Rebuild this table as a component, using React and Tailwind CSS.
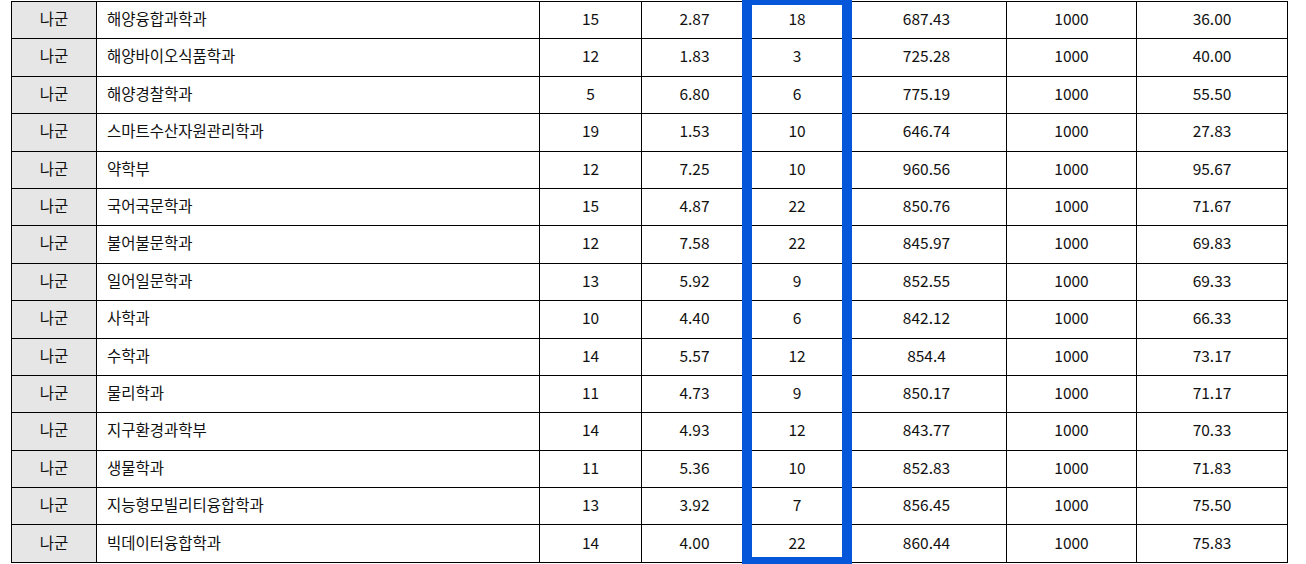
import React from 'react';

const rows = [
  ['해양융합과학과', '15', '2.87', '18', '687.43', '1000', '36.00'],
  ['해양바이오식품학과', '12', '1.83', '3', '725.28', '1000', '40.00'],
  ['해양경찰학과', '5', '6.80', '6', '775.19', '1000', '55.50'],
  ['스마트수산자원관리학과', '19', '1.53', '10', '646.74', '1000', '27.83'],
  ['약학부', '12', '7.25', '10', '960.56', '1000', '95.67'],
  ['국어국문학과', '15', '4.87', '22', '850.76', '1000', '71.67'],
  ['불어불문학과', '12', '7.58', '22', '845.97', '1000', '69.83'],
  ['일어일문학과', '13', '5.92', '9', '852.55', '1000', '69.33'],
  ['사학과', '10', '4.40', '6', '842.12', '1000', '66.33'],
  ['수학과', '14', '5.57', '12', '854.4', '1000', '73.17'],
  ['물리학과', '11', '4.73', '9', '850.17', '1000', '71.17'],
  ['지구환경과학부', '14', '4.93', '12', '843.77', '1000', '70.33'],
  ['생물학과', '11', '5.36', '10', '852.83', '1000', '71.83'],
  ['지능형모빌리티융합학과', '13', '3.92', '7', '856.45', '1000', '75.50'],
  ['빅데이터융합학과', '14', '4.00', '22', '860.44', '1000', '75.83'],
];

const cell = 'border-r border-b border-black flex items-center pb-[3px]';

export default function App() {
  return (
    <div className="h-[564px] overflow-hidden bg-white text-[15.5px] text-[#111] font-['Noto_Sans_CJK_KR','Noto_Sans',sans-serif]">
      <div className="relative ml-[11px] mt-[1px] w-fit">
        {/* Score table */}
        <div className="grid grid-cols-[85px_443px_102px_106px_99px_160px_130px_151px] auto-rows-[37.4px] border-l border-t border-black">
          {rows.map((r, i) => (
            <React.Fragment key={i}>
              <div className={`${cell} justify-center bg-[#e6e6e6]`}>나군</div>
              <div className={`${cell} pl-[10px]`}>{r[0]}</div>
              {r.slice(1).map((v, j) => (
                <div key={j} className={`${cell} justify-center`}>{v}</div>
              ))}
            </React.Fragment>
          ))}
        </div>

        {/* Highlight frame */}
        <div className="absolute left-[731px] top-[-6px] w-[110px] h-[572px] border-[10px] border-[#0556d9] pointer-events-none" />
      </div>
    </div>
  );
}
